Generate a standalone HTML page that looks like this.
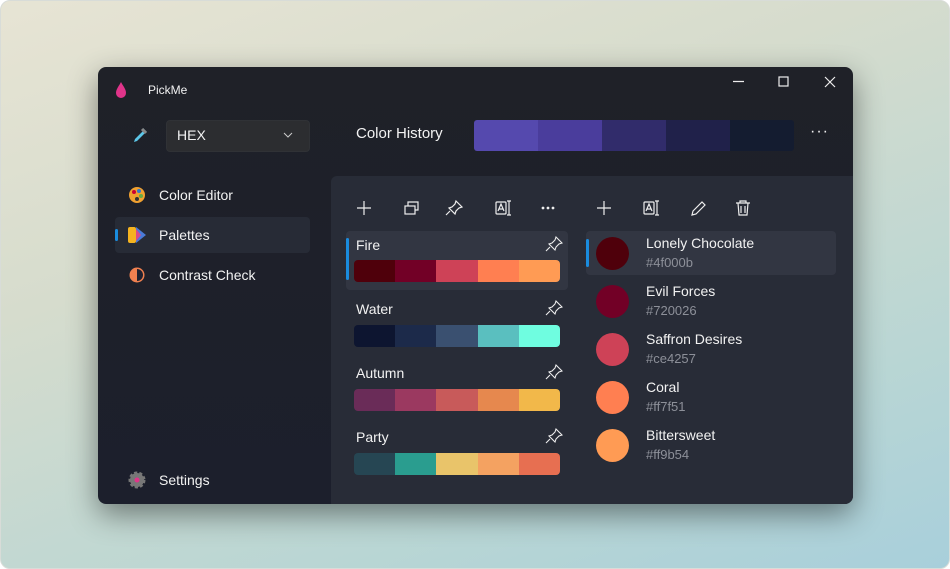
<!DOCTYPE html>
<html><head><style>
*{margin:0;padding:0;box-sizing:border-box}
body{width:950px;height:569px;overflow:hidden;font-family:"Segoe UI","Liberation Sans",sans-serif;background:#fff}
.bg{position:absolute;left:0;top:0;width:950px;height:569px;border-radius:10px;border:1px solid #d8dcd8;background:linear-gradient(160deg,#e7e4d4 0%,#d6dccd 35%,#b9d6d4 75%,#a8cfdb 100%)}
.win{position:absolute;left:98px;top:67px;width:755px;height:437px;border-radius:8px;background:linear-gradient(180deg,#1f2128 0%,#1c1f2c 100%);box-shadow:0 10px 30px rgba(0,0,0,.45);overflow:hidden;color:#fff}
.t{position:absolute;font-size:14px;color:#f2f2f2;white-space:nowrap}
.panel{position:absolute;left:233px;top:109px;width:522px;height:328px;background:#282c37;border-top-left-radius:6px}
.sw{position:absolute;height:22px;border-radius:4px;overflow:hidden;display:flex;width:206px;left:256px}
.sw div{flex:1}
.sel{position:absolute;background:#323642;border-radius:4px}
.bar{position:absolute;width:3px;background:#1a8cde;border-radius:2px}
.circ{position:absolute;left:498px;width:33px;height:33px;border-radius:50%}
.hx{position:absolute;left:548px;font-size:13px;color:#8d9099}
svg{position:absolute}
</style></head><body>
<div class="bg"></div>
<div class="win">
 <svg style="left:16px;top:14px" width="14" height="18" viewBox="0 0 14 18"><path d="M7 1C5 5 2 8 2 12a5 5 0 0 0 10 0C12 8 9 5 7 1z" fill="#e0348a"/></svg>
 <div class="t" style="left:50px;top:16px;font-size:12px">PickMe</div>
 <svg style="left:630px;top:8px" width="120" height="14" stroke="#eee" fill="none" stroke-width="1.2"><path d="M5 6.5h11"/><rect x="51" y="2" width="9" height="9"/><path d="M97 2l10 10M107 2l-10 10"/></svg>
 <svg style="left:33px;top:59px" width="18" height="18" viewBox="0 0 18 18"><path d="M12 2l4 4-2 1-5 5-3 3-3 1 1-3 3-3 5-5z" fill="#5cc6e8"/><path d="M11 3l4 4" stroke="#888" stroke-width="3"/></svg>
 <div style="position:absolute;left:68px;top:53px;width:144px;height:32px;background:#2c2d30;border-radius:4px;border:1px solid #303236"></div>
 <div class="t" style="left:79px;top:60px">HEX</div>
 <svg style="left:185px;top:65px" width="10" height="6" stroke="#ccc" fill="none"><path d="M1 1l4 4 4-4"/></svg>
 <div class="t" style="left:258px;top:58px;font-size:15px">Color History</div>
 <div style="position:absolute;left:376px;top:53px;width:320px;height:31px;display:flex;border-radius:3px;overflow:hidden"><div style="flex:1;background:#5549ae"></div><div style="flex:1;background:#4a3d9c"></div><div style="flex:1;background:#312c6b"></div><div style="flex:1;background:#20214a"></div><div style="flex:1;background:#141c30"></div></div>
 <div class="t" style="left:712px;top:56px;font-size:16px;letter-spacing:1px">···</div>

 <svg style="left:30px;top:119px" width="18" height="18"><circle cx="9" cy="9" r="8" fill="#f0a030"/><circle cx="6" cy="6" r="2" fill="#c03"/><circle cx="11" cy="5" r="2" fill="#37c"/><circle cx="13" cy="10" r="2" fill="#6a4"/><circle cx="9" cy="13" r="2" fill="#333"/></svg>
 <div class="t" style="left:61px;top:120px">Color Editor</div>
 <div class="sel" style="left:17px;top:150px;width:195px;height:36px;background:#272b36"></div>
 <div class="bar" style="left:17px;top:162px;height:12px"></div>
 <svg style="left:30px;top:160px" width="18" height="16"><rect x="0" y="0" width="8" height="16" rx="2" fill="#f5b320"/><path d="M8 0l10 8-10 8z" fill="#4a7ad8"/><path d="M8 2l5 6-5 6z" fill="#d84a8a"/></svg>
 <div class="t" style="left:61px;top:160px">Palettes</div>
 <svg style="left:30px;top:199px" width="18" height="18"><circle cx="9" cy="9" r="7.5" fill="#f08050"/><path d="M9 3a6 6 0 0 1 0 12z" fill="#1e2130"/></svg>
 <div class="t" style="left:61px;top:200px">Contrast Check</div>
 <svg style="left:30px;top:404px" width="18" height="18"><circle cx="9" cy="9" r="7" fill="#777" stroke="#777" stroke-width="3" stroke-dasharray="3 2"/><circle cx="9" cy="9" r="2.5" fill="#e0348a"/></svg>
 <div class="t" style="left:61px;top:405px">Settings</div>

 <div class="panel"></div>
 <svg style="left:256px;top:132px" width="400" height="18" stroke="#eee" fill="none" stroke-width="1.2">
  <path d="M10 2v14M3 9h14"/>
  <rect x="51" y="7" width="10" height="8"/><path d="M54 7V3h10v8h-3"/>
  <path d="M102 2l6 6-3 1-3 3-1 3-6-6 3-1 3-3zM96 12l-4 4"/>
  <rect x="142" y="3" width="10" height="12" rx="1"/><path d="M144 12l3-7 3 7M145 10h4M155 2v14M153 2h4M153 16h4"/>
  <circle cx="189" cy="9" r=".8" fill="#eee"/><circle cx="194" cy="9" r=".8" fill="#eee"/><circle cx="199" cy="9" r=".8" fill="#eee"/>
  <path d="M250 2v14M243 9h14"/>
  <rect x="290" y="3" width="10" height="12" rx="1"/><path d="M292 12l3-7 3 7M293 10h4M303 2v14M301 2h4M301 16h4"/>
  <path d="M338 16l1-4 9-9 3 3-9 9z"/>
  <path d="M382 4h14M386 4V2h6v2M384 4l1 12h8l1-12M387 7v7M391 7v7"/>
 </svg>

 <div class="sel" style="left:248px;top:164px;width:222px;height:59px"></div>
 <div class="bar" style="left:248px;top:171px;height:42px"></div>
 <div class="t" style="left:258px;top:170px">Fire</div>
 <div class="sw" style="top:193px"><div style="background:#4f000b"></div><div style="background:#720026"></div><div style="background:#ce4257"></div><div style="background:#ff7f51"></div><div style="background:#ff9b54"></div></div>
 <div class="t" style="left:258px;top:234px">Water</div>
 <div class="sw" style="top:258px"><div style="background:#0d1530"></div><div style="background:#1c2a4a"></div><div style="background:#3a5070"></div><div style="background:#5abfbf"></div><div style="background:#6ffde0"></div></div>
 <div class="t" style="left:258px;top:298px">Autumn</div>
 <div class="sw" style="top:322px"><div style="background:#6a2c58"></div><div style="background:#9b3960"></div><div style="background:#c85a5a"></div><div style="background:#e6884e"></div><div style="background:#f2b84a"></div></div>
 <div class="t" style="left:258px;top:362px">Party</div>
 <div class="sw" style="top:386px"><div style="background:#264653"></div><div style="background:#2a9d8f"></div><div style="background:#e9c46a"></div><div style="background:#f4a261"></div><div style="background:#e76f51"></div></div>
 <svg style="left:447px;top:169px" width="18" height="210" stroke="#eee" fill="none" stroke-width="1.1">
  <path d="M11 1l6 6-3 1-3 3-1 3-6-6 3-1 3-3zM5 11l-4 4"/>
  <path d="M11 65l6 6-3 1-3 3-1 3-6-6 3-1 3-3zM5 75l-4 4"/>
  <path d="M11 129l6 6-3 1-3 3-1 3-6-6 3-1 3-3zM5 139l-4 4"/>
  <path d="M11 193l6 6-3 1-3 3-1 3-6-6 3-1 3-3zM5 203l-4 4"/>
 </svg>

 <div class="sel" style="left:488px;top:164px;width:250px;height:44px"></div>
 <div class="bar" style="left:488px;top:172px;height:28px"></div>
 <div class="circ" style="top:170px;background:#4f000b"></div>
 <div class="t" style="left:548px;top:168px">Lonely Chocolate</div><div class="hx" style="top:188px">#4f000b</div>
 <div class="circ" style="top:218px;background:#720026"></div>
 <div class="t" style="left:548px;top:216px">Evil Forces</div><div class="hx" style="top:236px">#720026</div>
 <div class="circ" style="top:266px;background:#ce4257"></div>
 <div class="t" style="left:548px;top:264px">Saffron Desires</div><div class="hx" style="top:284px">#ce4257</div>
 <div class="circ" style="top:314px;background:#ff7f51"></div>
 <div class="t" style="left:548px;top:312px">Coral</div><div class="hx" style="top:332px">#ff7f51</div>
 <div class="circ" style="top:362px;background:#ff9b54"></div>
 <div class="t" style="left:548px;top:360px">Bittersweet</div><div class="hx" style="top:380px">#ff9b54</div>
</div>
</body></html>
